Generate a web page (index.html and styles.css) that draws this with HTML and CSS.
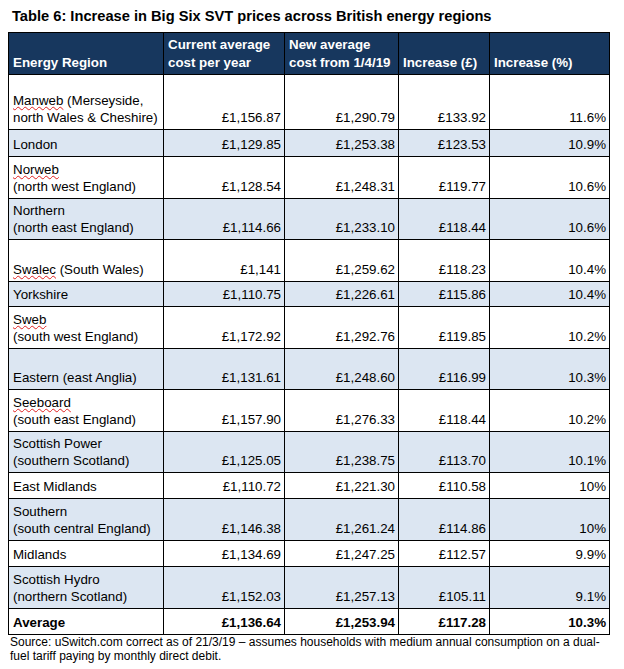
FILE: index.html
```html
<!DOCTYPE html>
<html>
<head>
<meta charset="utf-8">
<link rel="stylesheet" href="styles.css">
</head>
<body>
<h1 class="title">Table 6: Increase in Big Six SVT prices across British energy regions</h1>
<table class="prices">
  <colgroup>
    <col class="c-region"><col class="c-cur"><col class="c-new"><col class="c-inc"><col class="c-pct">
  </colgroup>
  <thead>
    <tr class="r42">
      <th>Energy Region</th>
      <th>Current average cost per year</th>
      <th>New average cost from 1/4/19</th>
      <th>Increase (£)</th>
      <th>Increase (%)</th>
    </tr>
  </thead>
  <tbody>
    <tr class="r55"><td><span class="sp">Manweb</span> (Merseyside, north Wales &amp; Cheshire)</td><td class="n">£1,156.87</td><td class="n">£1,290.79</td><td class="n">£133.92</td><td class="n">11.6%</td></tr>
    <tr class="alt r27"><td>London</td><td class="n">£1,129.85</td><td class="n">£1,253.38</td><td class="n">£123.53</td><td class="n">10.9%</td></tr>
    <tr class="r42"><td><span class="sp">Norweb</span><br>(north west England)</td><td class="n">£1,128.54</td><td class="n">£1,248.31</td><td class="n">£119.77</td><td class="n">10.6%</td></tr>
    <tr class="alt r41"><td>Northern<br>(north east England)</td><td class="n">£1,114.66</td><td class="n">£1,233.10</td><td class="n">£118.44</td><td class="n">10.6%</td></tr>
    <tr class="r42"><td><span class="sp">Swalec</span> (South Wales)</td><td class="n">£1,141</td><td class="n">£1,259.62</td><td class="n">£118.23</td><td class="n">10.4%</td></tr>
    <tr class="alt r25"><td>Yorkshire</td><td class="n">£1,110.75</td><td class="n">£1,226.61</td><td class="n">£115.86</td><td class="n">10.4%</td></tr>
    <tr class="r42"><td><span class="sp">Sweb</span><br>(south west England)</td><td class="n">£1,172.92</td><td class="n">£1,292.76</td><td class="n">£119.85</td><td class="n">10.2%</td></tr>
    <tr class="alt r41"><td>Eastern (east Anglia)</td><td class="n">£1,131.61</td><td class="n">£1,248.60</td><td class="n">£116.99</td><td class="n">10.3%</td></tr>
    <tr class="r42"><td><span class="sp">Seeboard</span><br>(south east England)</td><td class="n">£1,157.90</td><td class="n">£1,276.33</td><td class="n">£118.44</td><td class="n">10.2%</td></tr>
    <tr class="alt r41"><td>Scottish Power<br>(southern Scotland)</td><td class="n">£1,125.05</td><td class="n">£1,238.75</td><td class="n">£113.70</td><td class="n">10.1%</td></tr>
    <tr class="r26"><td>East Midlands</td><td class="n">£1,110.72</td><td class="n">£1,221.30</td><td class="n">£110.58</td><td class="n">10%</td></tr>
    <tr class="alt r42"><td>Southern<br>(south central England)</td><td class="n">£1,146.38</td><td class="n">£1,261.24</td><td class="n">£114.86</td><td class="n">10%</td></tr>
    <tr class="r26"><td>Midlands</td><td class="n">£1,134.69</td><td class="n">£1,247.25</td><td class="n">£112.57</td><td class="n">9.9%</td></tr>
    <tr class="alt r42"><td>Scottish Hydro<br>(northern Scotland)</td><td class="n">£1,152.03</td><td class="n">£1,257.13</td><td class="n">£105.11</td><td class="n">9.1%</td></tr>
    <tr class="avg r26"><td>Average</td><td class="n">£1,136.64</td><td class="n">£1,253.94</td><td class="n">£117.28</td><td class="n">10.3%</td></tr>
  </tbody>
</table>
<p class="source">Source: uSwitch.com correct as of 21/3/19 – assumes households with medium annual consumption on a dual-fuel tariff paying by monthly direct debit.</p>
</body>
</html>
```

FILE: styles.css
```css
html, body {
  background: #ffffff;
}
body {
  margin: 8px;
  font-family: "Liberation Sans", Arial, sans-serif;
  color: #000;
}
.title {
  margin: 0 0 7px 4px;
  font-size: 14.67px;
  line-height: 17px;
  font-weight: bold;
}
.prices {
  border-collapse: collapse;
  table-layout: fixed;
  width: 601px;
  font-size: 13.33px;
  line-height: 17px;
}
.c-region { width: 155px; }
.c-cur { width: 121px; }
.c-new { width: 114px; }
.c-inc { width: 91px; }
.c-pct { width: 120px; }
.prices th,
.prices td {
  border: 1px solid #000;
  padding: 0 3px 3px 4px;
  vertical-align: bottom;
  text-align: left;
}
.prices th {
  background: #17375e;
  color: #fff;
  font-weight: bold;
  line-height: 18px;
  padding-bottom: 2px;
}
.prices td.n {
  text-align: right;
}
.alt td {
  background: #dce6f2;
}
.avg td {
  font-weight: bold;
}
tr.r25 { height: 25px; }
tr.r26 { height: 26px; }
tr.r27 { height: 27px; }
tr.r41 { height: 41px; }
tr.r42 { height: 42px; }
tr.r55 { height: 55px; }
.sp {
  text-decoration: underline wavy #e02020;
  text-decoration-thickness: 1px;
  text-underline-offset: 1px;
}
.source {
  margin: 1px 0 0 2px;
  width: 599px;
  font-size: 12px;
  line-height: 13.5px;
}
```
